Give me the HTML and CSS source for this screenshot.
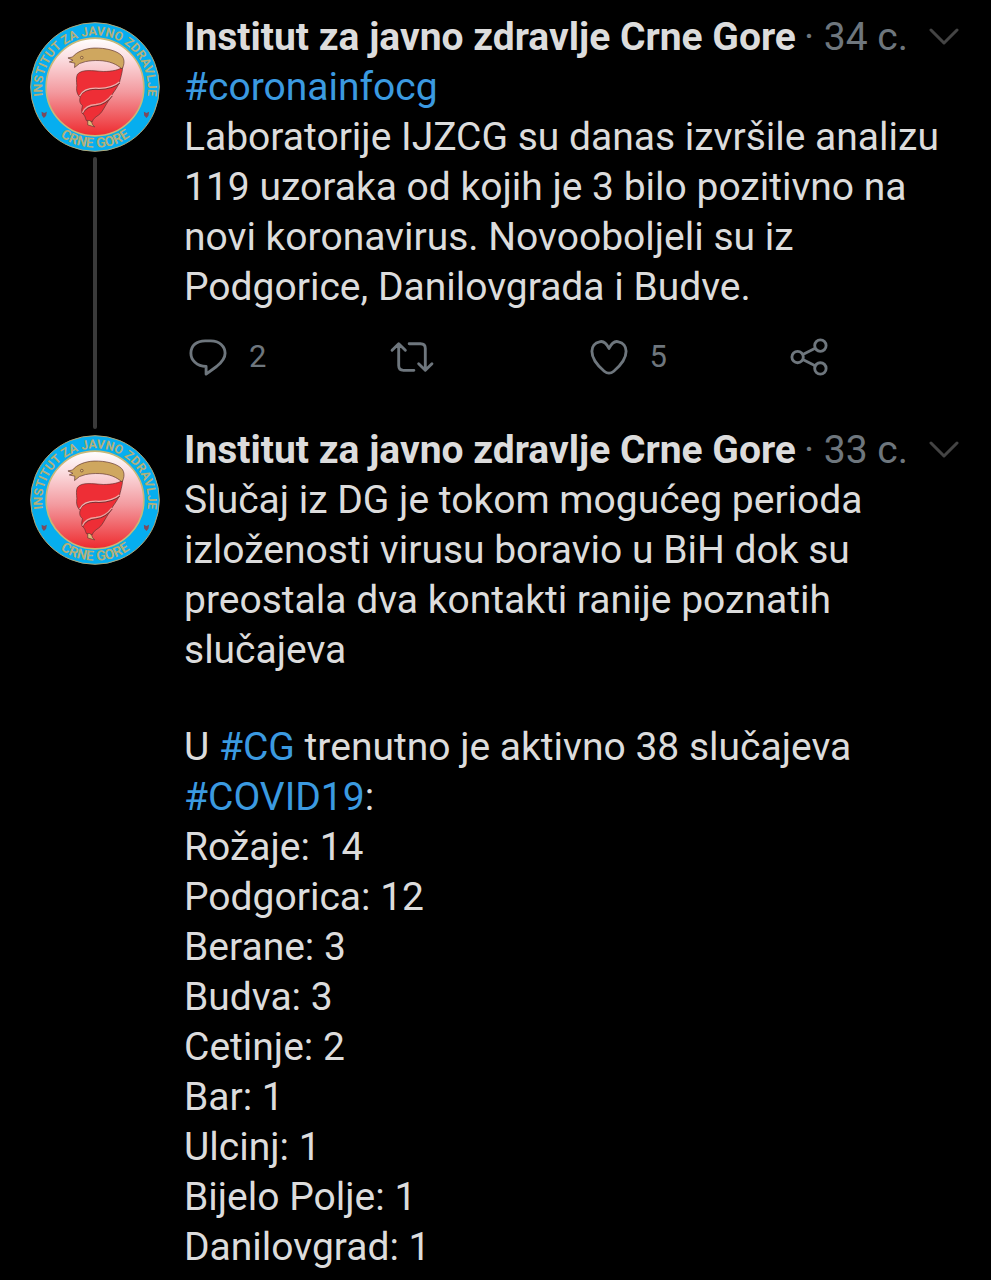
FILE: index.html
```
<!DOCTYPE html>
<html lang="sr-Latn">
	<head>
		<meta charset="utf-8">
		<title>Institut za javno zdravlje Crne Gore</title>
		<meta name="viewport" content="width=device-width">
		<link rel="stylesheet" href="styles.css">
	</head>
	<body>
		<!-- shared icons -->
		<svg class="defs" width="0" height="0" aria-hidden="true">
			<defs>
				<linearGradient id="inner" x1="0" y1="0" x2="0" y2="1">
					<stop offset="0" stop-color="#ffffff"/>
					<stop offset="0.2" stop-color="#fbdfe2"/>
					<stop offset="0.55" stop-color="#f39a9f"/>
					<stop offset="1" stop-color="#ee2a2e"/>
				</linearGradient>
				<path id="arc-top" d="M75 288A160 160 0 1 1 375 288"/>
				<path id="arc-bottom" d="M41 229A184 184 0 0 0 409 229"/>
				<symbol id="logo" viewBox="28 32 394 394">
					<circle cx="225" cy="229" r="195" fill="#06aeef" stroke="#b3a978" stroke-width="3"/>
					<circle cx="225" cy="229" r="148" fill="url(#inner)" stroke="#c9b877" stroke-width="5"/>
					<text class="logo-text" text-anchor="middle"><textPath href="#arc-top" startOffset="50%">INSTITUT ZA JAVNO ZDRAVLJE</textPath></text>
					<text class="logo-text logo-city" text-anchor="middle"><textPath href="#arc-bottom" startOffset="50%">CRNE GORE</textPath></text>
					<path d="M63 304L71 308L79 304L77 316L70 323L64 315Z" fill="#7d4a5c"/>
					<path d="M373 304L381 308L389 304L387 316L381 323L374 315Z" fill="#7d4a5c"/>
					<g stroke="#5d3330" stroke-width="2" stroke-linejoin="round">
						<path d="M172 190C188 174 215 180 250 182C278 182 300 177 309 168C308 186 302 203 299 216C292 232 280 246 275 255C268 268 262 277 256 287C249 299 244 308 236 314C225 321 218 327 217 334L199 331C195 323 196 316 186 308C183 299 186 292 187 285C177 278 178 267 180 260C169 250 168 237 170 225C169 212 167 199 172 190Z" fill="#ee2e36"/>
						<path d="M143 141L157 138C170 122 195 112 222 111C258 110 292 119 306 134C315 144 315 160 307 174C299 168 290 161 279 157C255 147 221 147 196 152L178 158L163 170L164 157L147 153L158 148Z" fill="#cfa75f"/>
						<path d="M203 331C210 328 216 335 217 342L224 350L214 347L203 344Z" fill="#dfb777"/>
					</g>
					<path d="M178 258C187 239 210 233 237 235C264 235 286 227 299 216" fill="none" stroke="#793234" stroke-width="6"/>
					<path d="M178 257C187 238 210 231 237 233C264 233 286 225 299 214" fill="none" stroke="#f4b0ad" stroke-width="4"/>
					<path d="M187 309C194 291 211 285 228 284C250 282 265 270 276 255" fill="none" stroke="#793234" stroke-width="6"/>
					<path d="M187 307C194 289 211 283 228 282C250 280 265 268 276 253" fill="none" stroke="#f4a09d" stroke-width="4"/>
					<circle cx="185" cy="140" r="4" fill="#e5c474" stroke="#5d3330" stroke-width="2"/>
				</symbol>
				<symbol id="chevron" viewBox="0 0 30 18">
					<path d="M2 2L15 15L28 2"/>
				</symbol>
				<symbol id="reply" viewBox="0 0 40 40">
					<path d="M17 3H23C32 3 38 9 38 16C38 22 34 26 29 30L18 38V30C8 30 2 23 2 16C2 8 8 3 17 3Z"/>
				</symbol>
				<symbol id="retweet" viewBox="0 0 46 40">
					<path d="M2 13L9 6L16 13M9 7V29Q9 34 14 34H25M20 6H32Q37 6 37 11V33M30 27L37 34L44 27"/>
				</symbol>
				<symbol id="heart" viewBox="0 0 40 40">
					<path d="M20 11C17 5 13 3 10 4C5 5 2 9 2 14C2 23 9 30 15 35Q20 39 25 35C31 30 38 23 38 14C38 9 35 5 30 4C27 3 23 5 20 11Z"/>
				</symbol>
				<symbol id="share" viewBox="0 0 40 40">
					<circle cx="8" cy="20" r="6"/>
					<circle cx="32" cy="8" r="6"/>
					<circle cx="32" cy="32" r="6"/>
					<path d="M14 17L26 11M14 23L26 29"/>
				</symbol>
			</defs>
		</svg>

		<main>
			<article class="tweet">
				<div class="side">
					<svg class="avatar" role="img" aria-label="Institut za javno zdravlje Crne Gore"><use href="#logo"/></svg>
					<div class="thread"></div>
				</div>
				<div class="content">
					<header>
						<h2>Institut za javno zdravlje Crne Gore</h2>
						<span class="time">· 34 с.</span>
						<button class="more" aria-label="Više"><svg><use href="#chevron"/></svg></button>
					</header>
					<p><a href="#coronainfocg">#coronainfocg</a><br>
					Laboratorije IJZCG su danas izvršile analizu 119 uzoraka od kojih je 3 bilo pozitivno na novi koronavirus. Novooboljeli su iz Podgorice, Danilovgrada i Budve.</p>
					<div class="actions">
						<button aria-label="Odgovori"><svg><use href="#reply"/></svg><span>2</span></button>
						<button aria-label="Retvituj"><svg class="wide"><use href="#retweet"/></svg></button>
						<button aria-label="Sviđa mi se"><svg><use href="#heart"/></svg><span>5</span></button>
						<button aria-label="Podeli"><svg><use href="#share"/></svg></button>
					</div>
				</div>
			</article>

			<article class="tweet">
				<div class="side">
					<svg class="avatar" role="img" aria-label="Institut za javno zdravlje Crne Gore"><use href="#logo"/></svg>
				</div>
				<div class="content">
					<header>
						<h2>Institut za javno zdravlje Crne Gore</h2>
						<span class="time">· 33 с.</span>
						<button class="more" aria-label="Više"><svg><use href="#chevron"/></svg></button>
					</header>
					<p>Slučaj iz DG je tokom mogućeg perioda izloženosti virusu boravio u BiH dok su preostala dva kontakti ranije poznatih slučajeva</p>
					<p>U <a href="#cg">#CG</a> trenutno je aktivno 38 slučajeva <a href="#covid19">#COVID19</a>:</p>
					<ul>
						<li>Rožaje: 14</li>
						<li>Podgorica: 12</li>
						<li>Berane: 3</li>
						<li>Budva: 3</li>
						<li>Cetinje: 2</li>
						<li>Bar: 1</li>
						<li>Ulcinj: 1</li>
						<li>Bijelo Polje: 1</li>
						<li>Danilovgrad: 1</li>
					</ul>
				</div>
			</article>
		</main>
	</body>
</html>
```
FILE: styles.css
```
* {
	margin: 0;
	padding: 0;
	box-sizing: border-box;
}

body {
	background-color: #000;
	color: #dcdcdc;
	font-family: Roboto, sans-serif;
	font-size: 39px;
	line-height: 50px;
}

main {
	padding-top: 12px;
}

.defs {
	position: absolute;
}

.tweet {
	display: flex;
	gap: 24px;
	padding-left: 30px;
}

.side {
	display: flex;
	flex-direction: column;
	align-items: center;
	flex: none;
	width: 130px;
	padding-top: 9px;
}

.avatar {
	flex: none;
	width: 130px;
	height: 132px;
}

.logo-text {
	font-family: "Liberation Sans Narrow", Roboto, sans-serif;
	font-size: 38px;
	font-weight: bold;
	fill: #b3b07a;
}

.logo-city {
	font-family: Roboto, sans-serif;
	font-size: 42px;
}

/* line joining the two tweets */
.thread {
	flex: 1;
	width: 4px;
	margin-top: 4px;
	margin-bottom: -4px;
	border-radius: 2px;
	background-color: #3a3a3a;
}

.content {
	flex: 1;
	min-width: 0;
}

.content header {
	display: flex;
	align-items: center;
	padding-right: 32px;
}

h2 {
	font-size: 39px;
	font-weight: bold;
}

.time {
	margin-left: 8px;
	color: #6e767d;
	white-space: nowrap;
}

button {
	border: none;
	background: none;
	color: #6e767d;
	font-family: inherit;
	cursor: pointer;
}

button svg {
	display: block;
	width: 38px;
	height: 38px;
	fill: none;
	stroke: #6e767d;
	stroke-width: 3;
	stroke-linecap: round;
	stroke-linejoin: round;
}

.more {
	margin-left: auto;
}

.more svg {
	width: 30px;
	height: 18px;
	stroke: #444;
}

p,
ul {
	padding-right: 32px;
}

p + p {
	margin-top: 47px;
}

ul {
	list-style: none;
}

a {
	color: #3b9ae0;
	text-decoration: none;
}

.actions {
	display: grid;
	grid-template-columns: repeat(4, 1fr);
	padding: 20px 6px 43px 0;
}

.actions button {
	display: flex;
	align-items: center;
	gap: 22px;
	padding-left: 5px;
	font-size: 31px;
	line-height: 50px;
}

.actions .wide {
	width: 46px;
}
```
